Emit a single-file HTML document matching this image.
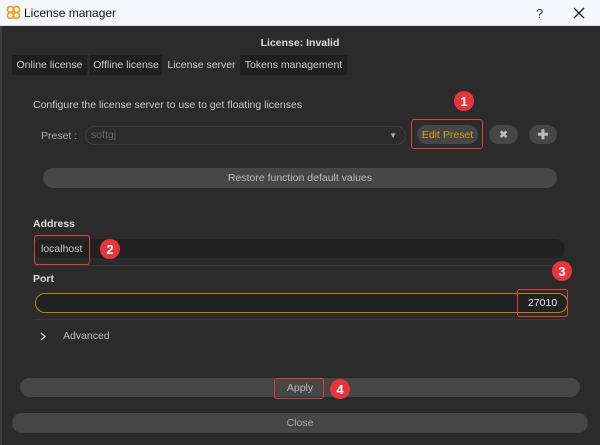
<!DOCTYPE html>
<html><head><style>
*{margin:0;padding:0;box-sizing:border-box}
body{width:600px;height:445px;background:#2b2b2b;font-family:"Liberation Sans",sans-serif;font-size:10.5px;color:#c8c8c8;position:relative;overflow:hidden}
.a{position:absolute}
.title{left:0;top:0;width:600px;height:26px;background:#f4f7fb;color:#111;border-bottom:1px solid #ddd}
.tab{top:55px;height:20px;background:#1f1f1f;color:#ccc;display:flex;align-items:center;justify-content:center}
.btn{background:#464646;border-radius:10px;color:#bbb;display:flex;align-items:center;justify-content:center}
.red{border:1.5px solid #e23b3b;border-radius:3px}
.badge{width:20px;height:20px;border-radius:50%;background:#e8343a;color:#fff;font-size:13px;display:flex;align-items:center;justify-content:center;font-weight:bold}
.field{background:#212121;border-radius:10px}
.sep{height:1px;background:#3a3a3a}
</style></head><body>
<div class="a title">
 <svg class="a" style="left:6px;top:5px" width="15" height="15" viewBox="0 0 15 15"><g fill="none" stroke="#f0a020" stroke-width="1.8"><circle cx="4.5" cy="4.5" r="3"/><circle cx="10.5" cy="4.5" r="3"/><circle cx="4.5" cy="10.5" r="3"/><circle cx="10.5" cy="10.5" r="3"/></g></svg>
 <div class="a" style="left:24px;top:6px;font-size:12px">License manager</div>
 <div class="a" style="left:536px;top:6px;font-size:13px;color:#333">?</div>
 <svg class="a" style="left:573px;top:7px" width="12" height="12"><path d="M1 1L11 11M11 1L1 11" stroke="#222" stroke-width="1.3"/></svg>
</div>
<div class="a" style="left:0;top:26px;width:2px;height:419px;background:#3d3d3d"></div>
<div class="a" style="left:0;top:37px;width:600px;text-align:center;font-weight:bold;color:#ddd">License: Invalid</div>
<div class="a tab" style="left:12px;width:75px">Online license</div>
<div class="a tab" style="left:90px;width:72px">Offline license</div>
<div class="a tab" style="left:165px;width:73px;background:#2b2b2b">License server</div>
<div class="a tab" style="left:240px;width:107px">Tokens management</div>
<div class="a" style="left:33px;top:99px">Configure the license server to use to get floating licenses</div>
<div class="a" style="left:41px;top:130px;color:#aaa">Preset :</div>
<div class="a" style="left:85px;top:126px;width:321px;height:19px;border:1px solid #3c3c3c;border-radius:10px;background:#2b2b2b;color:#666;padding-left:5px;line-height:17px">softgj<span class="a" style="right:8px;top:0;font-size:8px;color:#aaa">▼</span></div>
<div class="a btn" style="left:417px;top:125px;width:61px;height:19px;color:#d89c22">Edit Preset</div>
<div class="a red" style="left:411px;top:119px;width:72px;height:30px"></div>
<div class="a badge" style="left:454px;top:91px">1</div>
<div class="a btn" style="left:489px;top:125px;width:29px;height:19px;color:#bbb;font-weight:bold">✖</div>
<div class="a btn" style="left:529px;top:125px;width:28px;height:19px;color:#bbb;font-weight:bold;font-size:13px">✚</div>
<div class="a btn" style="left:43px;top:168px;width:514px;height:20px">Restore function default values</div>
<div class="a" style="left:33px;top:218px;font-weight:bold;color:#ddd">Address</div>
<div class="a field" style="left:33px;top:239px;width:532px;height:19px"></div>
<div class="a" style="left:41px;top:243px">localhost</div>
<div class="a red" style="left:34px;top:235px;width:56px;height:30px"></div>
<div class="a badge" style="left:100px;top:239px">2</div>
<div class="a sep" style="left:33px;top:265px;width:532px"></div>
<div class="a" style="left:33px;top:273px;font-weight:bold;color:#ddd">Port</div>
<div class="a field" style="left:35px;top:293px;width:533px;height:20px;border:1.5px solid #b8860b"></div>
<div class="a" style="left:528px;top:297px;color:#eee">27010</div>
<div class="a red" style="left:517px;top:289px;width:51px;height:28px"></div>
<div class="a badge" style="left:552px;top:261px">3</div>
<div class="a sep" style="left:33px;top:319px;width:532px"></div>
<svg class="a" style="left:40px;top:332px" width="6" height="9"><path d="M1 1L5 4.5L1 8" fill="none" stroke="#ccc" stroke-width="1.3"/></svg>
<div class="a" style="left:63px;top:330px;color:#bbb">Advanced</div>
<div class="a btn" style="left:20px;top:378px;width:560px;height:19px">Apply</div>
<div class="a red" style="left:274px;top:378px;width:50px;height:21px"></div>
<div class="a badge" style="left:330px;top:379px">4</div>
<div class="a btn" style="left:12px;top:413px;width:576px;height:20px;color:#aaa">Close</div>
</body></html>
